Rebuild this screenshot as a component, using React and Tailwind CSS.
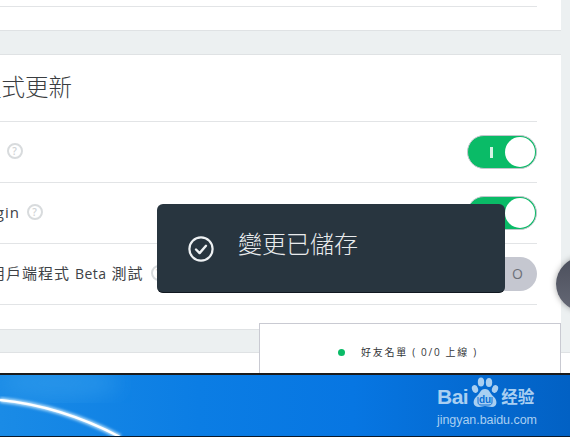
import React from "react";

const font = { fontFamily: '"Open Sans","Noto Sans CJK TC",sans-serif' };

function Help({ className = "" }) {
  return (
    <span className={"flex h-[16px] w-[16px] shrink-0 items-center justify-center rounded-full border-2 border-[#d8dbdd] text-[10px] font-semibold leading-none text-[#d0d3d5] " + className}>?</span>
  );
}

function Toggle({ on }) {
  if (on) {
    return (
      <div className="flex h-[34px] w-[70px] shrink-0 items-center justify-between rounded-full border border-[#c3c6cc] bg-[#0abb67] pl-[22px] pr-[1px]">
        <span className="h-[11px] w-[3px] bg-[#d5f3e4]" />
        <span className="h-[30px] w-[30px] rounded-full bg-white" />
      </div>
    );
  }
  return (
    <div className="flex h-[34px] w-[70px] shrink-0 items-center justify-end rounded-full bg-[#c5c7d0] pr-[14px]">
      <span className="text-[14px] leading-none text-[#6c7079]">O</span>
    </div>
  );
}

function Row({ children, on }) {
  return (
    <div className="flex h-[61px] items-center justify-between border-b border-[#e2e4e6]">
      <div className="flex items-center gap-[7px] whitespace-nowrap pb-[2px] text-[15px] leading-[20px] tracking-[1px] text-[#3e4246]">{children}</div>
      <Toggle on={on} />
    </div>
  );
}

function Wallpaper() {
  return (
    <svg className="absolute inset-0 h-full w-full" viewBox="0 0 570 61" preserveAspectRatio="none" aria-hidden="true">
      <defs>
        <linearGradient id="sky" x1="0" y1="0" x2="1" y2="0">
          <stop offset="0" stopColor="#1a8be6" />
          <stop offset="0.35" stopColor="#0b7de4" />
          <stop offset="0.62" stopColor="#0776e2" />
          <stop offset="1" stopColor="#0261c4" />
        </linearGradient>
        <filter id="soft"><feGaussianBlur stdDeviation="1.4" /></filter>
        <filter id="softer"><feGaussianBlur stdDeviation="10" /></filter>
      </defs>
      <rect width="570" height="61" fill="url(#sky)" />
      <ellipse cx="60" cy="8" rx="60" ry="16" fill="#3aa3ee" opacity="0.45" filter="url(#softer)" />
      <path d="M0 25 C40 29 82 42 120 62" fill="none" stroke="#bfe3fb" strokeWidth="5" filter="url(#soft)" />
      <path d="M0 25 C40 29 82 42 120 62" fill="none" stroke="#ffffff" strokeWidth="2.4" />
    </svg>
  );
}

function BaiduLogo() {
  const c = "#a9cff1";
  return (
    <div className="absolute left-[437px] top-[1px] w-[116px] text-[#a9cff1]" style={{ fontFamily: '"Liberation Sans","Noto Sans CJK SC",sans-serif' }}>
      <div className="flex h-[33px] items-end">
        <span className="text-[21px] font-bold leading-[24px] tracking-[-0.5px]">Bai</span>
        <svg width="30" height="33" viewBox="0 0 30 33" className="ml-[1px] shrink-0" aria-hidden="true">
          <ellipse cx="6" cy="13" rx="3" ry="4" fill={c} transform="rotate(-20 6 13)" />
          <ellipse cx="12" cy="6" rx="3.2" ry="4.5" fill={c} />
          <ellipse cx="20" cy="6.5" rx="3.2" ry="4.5" fill={c} />
          <ellipse cx="26" cy="13" rx="3" ry="4" fill={c} transform="rotate(20 26 13)" />
          <path d="M16 13 C11 13 11 18 7 21 C3 25 4 31 10 31 C13 31 14 30 16 30 C18 30 20 31 23 31 C28 31 29 25 25 21 C21 18 21 13 16 13Z" fill={c} />
          <path d="M9 21 v5 c0 2 1 3 3 3 h8 c2 0 3-1 3-3 v-5" fill="none" stroke="#0a6fd6" strokeWidth="1" />
          <text x="16" y="27" textAnchor="middle" fontSize="10" fontWeight="700" fill="#0a6fd6" fontFamily="Liberation Sans">du</text>
        </svg>
        <span className="ml-[2px] text-[16.5px] font-bold leading-[23px]">经验</span>
      </div>
      <div className="mt-[3px] text-[12.5px] leading-[16px] tracking-[-0.05px]">jingyan.baidu.com</div>
    </div>
  );
}

export default function App() {
  return (
    <div className="flex h-[437px] w-[570px] flex-col overflow-hidden bg-black" style={font}>
      <div className="relative h-[373px] shrink-0 overflow-hidden bg-[#ecf0f1]">
        <div className="mr-[9px] h-[31px] border-b border-[#dfe2e4] bg-white pr-[24px]">
          <div className="h-[7px] border-b border-[#e2e4e6]" />
        </div>

        <div className="mr-[9px] mt-[23px] h-[276px] border-y border-[#dfe2e4] bg-white pr-[24px]">
          <div className="flex h-[67px] items-center border-b border-[#e2e4e6]">
            <h2 className="-ml-[22px] whitespace-nowrap text-[23.5px] font-light leading-none text-[#3a3d40]">程式更新</h2>
          </div>
          <Row on><Help className="ml-[7px]" /></Row>
          <Row on><span className="-ml-[23px]">Login</span><Help /></Row>
          <Row>
            <span className="-ml-[10px]">用戶端程式 <span className="text-[14px] tracking-[0.5px]">Beta</span> 測試</span>
            <Help />
          </Row>
        </div>

        <div className="mt-[22px] h-[30px] border-t border-[#dfe2e4] bg-white" />

        <div className="absolute left-[259px] top-[323px] flex h-[60px] w-[302px] items-start justify-center border border-[#c9cad2] bg-white pt-[21px]">
          <div className="flex items-center gap-[16px] pr-[4px]">
            <span className="h-[7px] w-[7px] rounded-full bg-[#0abb67]" />
            <span className="whitespace-nowrap text-[10px] leading-[14px] tracking-[1.7px] text-[#33363a]">好友名單 ( 0/0 上線 )</span>
          </div>
        </div>

        <div className="absolute left-[556px] top-[257px] h-[54px] w-[54px] rounded-full bg-gradient-to-b from-[#4b4f5c] to-[#656875] shadow-[0_0_6px_rgba(0,0,0,0.35)]" />

        <div className="absolute left-[157px] top-[204px] flex h-[89px] w-[348px] items-start rounded-[6px] border-b border-[#111820] bg-[#28353f] pl-[31px] pt-[26px]">
          <svg width="26" height="26" viewBox="0 0 26 26" fill="none" stroke="#eef1f3" className="mt-[6px] shrink-0" aria-hidden="true">
            <circle cx="13" cy="13" r="11.6" strokeWidth="2.2" />
            <path d="M8 13.5l3.6 3.6L18 9.8" strokeWidth="2.4" strokeLinecap="round" strokeLinejoin="round" />
          </svg>
          <span className="ml-[24px] whitespace-nowrap text-[24px] font-light leading-[28px] text-[#e8ebed]">變更已儲存</span>
        </div>
      </div>

      <div className="h-[2px] shrink-0 bg-[#1b1b1b]" />
      <div className="relative h-[61px] shrink-0 overflow-hidden">
        <Wallpaper />
        <BaiduLogo />
      </div>
      <div className="flex-1 bg-[#0a1a2c]" />
    </div>
  );
}
